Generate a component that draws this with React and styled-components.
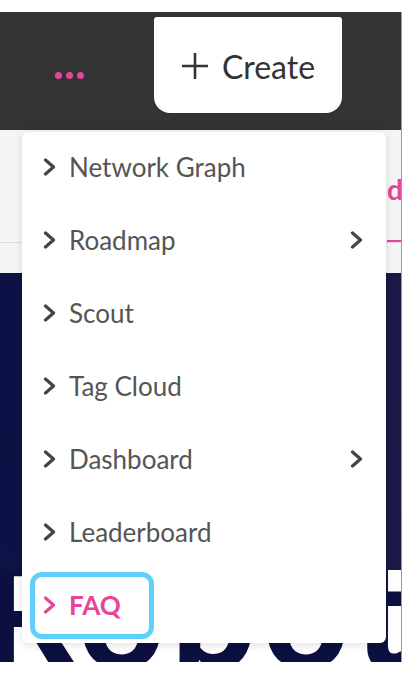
import React from "react";
import styled, { createGlobalStyle } from "styled-components";

const GlobalStyle = createGlobalStyle`
  body {
    margin: 0;
    background: #ffffff;
    font-family: Lato, "Open Sans", sans-serif;
  }
`;

const items = [
  { label: "Network Graph" },
  { label: "Roadmap", sub: true },
  { label: "Scout" },
  { label: "Tag Cloud" },
  { label: "Dashboard", sub: true },
  { label: "Leaderboard" },
  { label: "FAQ", active: true },
];

function Chevron({ color = "#444444" }) {
  return (
    <svg width="13" height="18" viewBox="0 0 13 18" fill="none">
      <path d="M2.5 2 L10.5 9 L2.5 16" stroke={color} strokeWidth="3.2" strokeLinecap="round" strokeLinejoin="round" />
    </svg>
  );
}

function App() {
  return (
    <>
      <GlobalStyle />
      <Frame>
        <Header>
          <Dots>
            <Dot />
            <Dot />
            <Dot />
          </Dots>
          <CreateButton>
            <svg width="28" height="28" viewBox="0 0 28 28">
              <path d="M14 1 V27 M1 14 H27" stroke="#333" strokeWidth="2.6" />
            </svg>
            Create
          </CreateButton>
        </Header>
        <Tabs>
          <TabRow>
            <Tab>discussions</Tab>
          </TabRow>
        </Tabs>
        <Hero />
        <Below>
          <BigWord>Robot</BigWord>
        </Below>
        <Menu>
          {items.map((item) => (
            <MenuItem key={item.label}>
              <MenuLink $active={item.active}>
                <Chevron color={item.active ? "#e8459a" : "#444444"} />
                <span>{item.label}</span>
              </MenuLink>
              {item.sub && (
                <SubArrow>
                  <Chevron />
                </SubArrow>
              )}
            </MenuItem>
          ))}
        </Menu>
      </Frame>
    </>
  );
}

export default App;

const Frame = styled.div`
  position: relative;
  width: 401px;
  height: 650px;
  margin-top: 12px;
  border-right: 1px solid #9a9aa2;
  overflow: hidden;
  display: flex;
  flex-direction: column;
`;

const Header = styled.header`
  height: 118px;
  flex-shrink: 0;
  background: #333333;
  display: flex;
  align-items: flex-start;
`;

const Dots = styled.div`
  display: flex;
  gap: 4px;
  margin: 60px 0 0 55px;
  width: 99px;
`;

const Dot = styled.span`
  width: 7px;
  height: 7px;
  border-radius: 50%;
  background: #e8459a;
`;

const CreateButton = styled.button`
  margin-top: 5px;
  width: 188px;
  height: 96px;
  border: none;
  background: #ffffff;
  border-radius: 3px 3px 16px 16px;
  display: flex;
  align-items: center;
  justify-content: center;
  gap: 13px;
  font-family: Lato, "Open Sans", sans-serif;
  font-size: 32px;
  color: #333333;
  padding: 2px 0 0;
`;

const Tabs = styled.div`
  height: 143px;
  flex-shrink: 0;
  background: #f5f5f6;
`;

const TabRow = styled.div`
  height: 112px;
  border-bottom: 1px solid #dddddd;
  display: flex;
  justify-content: flex-end;
  overflow: hidden;
`;

const Tab = styled.div`
  margin-right: -84px;
  width: 98px;
  padding-top: 42px;
  font-size: 28px;
  font-weight: 700;
  color: #e8459a;
  border-bottom: 2px solid #e8459a;
  white-space: nowrap;
  overflow: hidden;
  box-sizing: border-box;
  height: 112px;
`;

const Hero = styled.div`
  height: 297px;
  flex-shrink: 0;
  background: linear-gradient(100deg, #0c1245 0%, #14144a 60%, #1c1a45 100%);
`;

const Below = styled.div`
  flex: 1;
  background: #ffffff;
  overflow: hidden;
`;

const BigWord = styled.div`
  margin: -34px 0 0 -20px;
  font-size: 150px;
  font-weight: 900;
  color: #0c1040;
  line-height: 1;
  letter-spacing: 6px;
`;

const Menu = styled.nav`
  position: absolute;
  left: 22px;
  top: 120px;
  width: 364px;
  background: #ffffff;
  border-radius: 6px;
  box-shadow: 0 2px 10px rgba(0, 0, 0, 0.12);
  display: flex;
  flex-direction: column;
`;

const MenuItem = styled.div`
  height: 73px;
  display: flex;
  align-items: center;
  justify-content: space-between;
  padding: 0 23px 3px 13px;
  box-sizing: border-box;
`;

const MenuLink = styled.a`
  display: flex;
  align-items: center;
  gap: 13px;
  height: 57px;
  padding: 0 0 0 8px;
  width: ${({ $active }) => ($active ? "114px" : "auto")};
  box-sizing: border-box;
  border-radius: 7px;
  outline: ${({ $active }) => ($active ? "5px solid #5fd0fb" : "none")};
  font-size: 26px;
  font-weight: ${({ $active }) => ($active ? 700 : 400)};
  color: ${({ $active }) => ($active ? "#e8459a" : "#555555")};
`;

const SubArrow = styled.span`
  display: flex;
  align-items: center;
`;
